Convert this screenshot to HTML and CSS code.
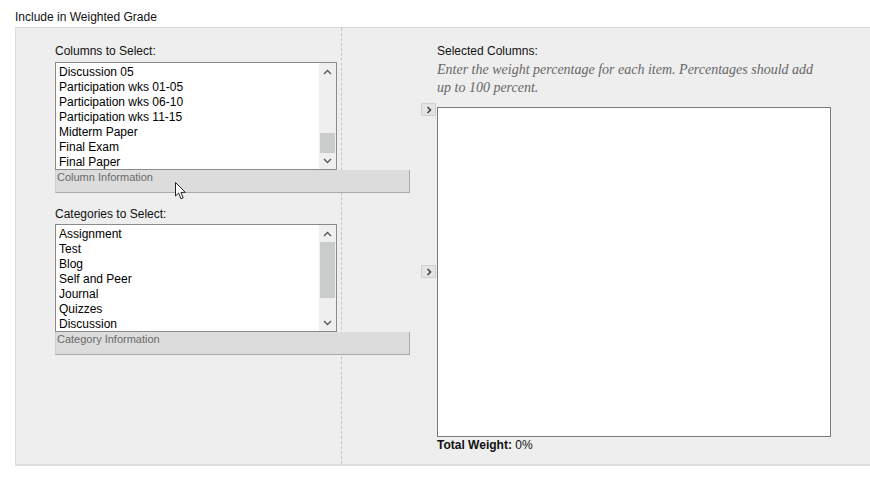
FILE: index.html
```html
<!DOCTYPE html>
<html>
<head>
<meta charset="utf-8">
<title>Include in Weighted Grade</title>
<link rel="stylesheet" href="styles.css">
</head>
<body>
<div class="heading">Include in Weighted Grade</div>
<div class="panel">
  <div class="left">
    <div class="label">Columns to Select:</div>
    <div class="listbox">
      <div class="items">
        <div>Discussion 05</div>
        <div>Participation wks 01-05</div>
        <div>Participation wks 06-10</div>
        <div>Participation wks 11-15</div>
        <div>Midterm Paper</div>
        <div>Final Exam</div>
        <div>Final Paper</div>
      </div>
      <div class="scrollbar">
        <div class="arrow up"><svg width="9" height="6" viewBox="0 0 9 6"><path d="M1 5 L4.5 1.5 L8 5" fill="none" stroke="#555" stroke-width="1.3"/></svg></div>
        <div class="track"><div class="thumb thumb-cols"></div></div>
        <div class="arrow down"><svg width="9" height="6" viewBox="0 0 9 6"><path d="M1 1 L4.5 4.5 L8 1" fill="none" stroke="#555" stroke-width="1.3"/></svg></div>
      </div>
    </div>
    <div class="info">Column Information
      <svg class="cursor" width="12" height="18" viewBox="0 0 12 18"><path d="M0.5 0.5 L0.5 14 L3.6 11 L6 16.8 L8.2 15.8 L5.9 10.4 L10.3 10.4 Z" fill="#fff" stroke="#222" stroke-width="1"/></svg>
    </div>

    <div class="label label-gap">Categories to Select:</div>
    <div class="listbox">
      <div class="items">
        <div>Assignment</div>
        <div>Test</div>
        <div>Blog</div>
        <div>Self and Peer</div>
        <div>Journal</div>
        <div>Quizzes</div>
        <div>Discussion</div>
      </div>
      <div class="scrollbar">
        <div class="arrow up"><svg width="9" height="6" viewBox="0 0 9 6"><path d="M1 5 L4.5 1.5 L8 5" fill="none" stroke="#555" stroke-width="1.3"/></svg></div>
        <div class="track"><div class="thumb thumb-cats"></div></div>
        <div class="arrow down"><svg width="9" height="6" viewBox="0 0 9 6"><path d="M1 1 L4.5 4.5 L8 1" fill="none" stroke="#555" stroke-width="1.3"/></svg></div>
      </div>
    </div>
    <div class="info">Category Information</div>
  </div>

  <div class="right">
    <div class="label">Selected Columns:</div>
    <div class="hint">Enter the weight percentage for each item. Percentages should add up to 100 percent.</div>
    <div class="selected-wrap">
      <div class="selected"></div>
      <button class="move move-1"><svg width="6" height="8" viewBox="0 0 6 8"><path d="M1.5 1 L4.5 4 L1.5 7" fill="none" stroke="#444" stroke-width="1.6"/></svg></button>
      <button class="move move-2"><svg width="6" height="8" viewBox="0 0 6 8"><path d="M1.5 1 L4.5 4 L1.5 7" fill="none" stroke="#444" stroke-width="1.6"/></svg></button>
    </div>
    <div class="total"><b>Total Weight:</b> 0%</div>
  </div>
</div>
</body>
</html>
```

FILE: styles.css
```css
* { box-sizing: border-box; }
html, body { margin: 0; padding: 0; background: #fff; }
body {
  font-family: "Liberation Sans", Arial, sans-serif;
  font-size: 12px;
  color: #000;
}
.heading {
  height: 27px;
  padding: 10px 0 0 15px;
  line-height: 14px;
  color: #111;
}
.panel {
  margin-left: 15px;
  height: 439px;
  background: #eeeeee;
  border-top: 1px solid #d6d6d6;
  border-left: 1px solid #dddddd;
  border-bottom: 2px solid #dddddd;
  display: grid;
  grid-template-columns: 326px 1fr;
}
.left {
  border-right: 1px dashed #c4c4c4;
  padding: 16px 0 0 39px;
  position: relative;
}
.label {
  line-height: 15px;
  margin-bottom: 3px;
  color: #111;
}
.label-gap { margin-top: 14px; margin-bottom: 2px; }
.listbox {
  width: 282px;
  height: 108px;
  background: #fff;
  border: 1px solid #8a8a8a;
  display: flex;
  overflow: hidden;
}
.items {
  flex: 1;
  padding: 2px 0 0 3px;
  line-height: 15px;
  font-size: 12px;
}
.scrollbar {
  width: 17px;
  background: #efefef;
  display: flex;
  flex-direction: column;
}
.arrow {
  height: 17px;
  display: flex;
  align-items: center;
  justify-content: center;
}
.track { flex: 1; position: relative; }
.thumb {
  position: absolute;
  left: 1px;
  right: 1px;
  background: #c8cdcc;
}
.thumb-cols { top: 53px; height: 20px; }
.thumb-cats { top: 0px; height: 56px; }
.info {
  position: relative;
  width: 355px;
  height: 23px;
  background: #dcdcdc;
  border-right: 1px solid #a8a8a8;
  border-bottom: 1px solid #a8a8a8;
  border-left: 1px solid #cfcfcf;
  color: #6a6a6a;
  font-size: 11px;
  line-height: 13px;
  padding: 1px 0 0 1px;
}
.cursor {
  position: absolute;
  left: 119px;
  top: 12px;
}
.right {
  padding: 16px 0 0 95px;
}
.hint {
  font-family: "Liberation Serif", "Times New Roman", serif;
  font-style: italic;
  font-size: 14px;
  line-height: 18px;
  color: #666;
  width: 384px;
  margin-top: -1px;
}
.selected-wrap {
  position: relative;
  margin-top: 10px;
  width: 394px;
}
.selected {
  height: 330px;
  background: #fff;
  border: 1px solid #7a7a7a;
}
.move {
  position: absolute;
  left: -16px;
  width: 15px;
  height: 13px;
  padding: 0;
  margin: 0;
  background: #e4e4e4;
  border: 1px solid #cfcfcf;
  border-radius: 1px;
  display: flex;
  align-items: center;
  justify-content: center;
}
.move-1 { top: -4px; }
.move-2 { top: 158px; }
.total {
  margin-top: 1px;
  line-height: 15px;
  color: #111;
}
.total b { font-weight: bold; }
```
